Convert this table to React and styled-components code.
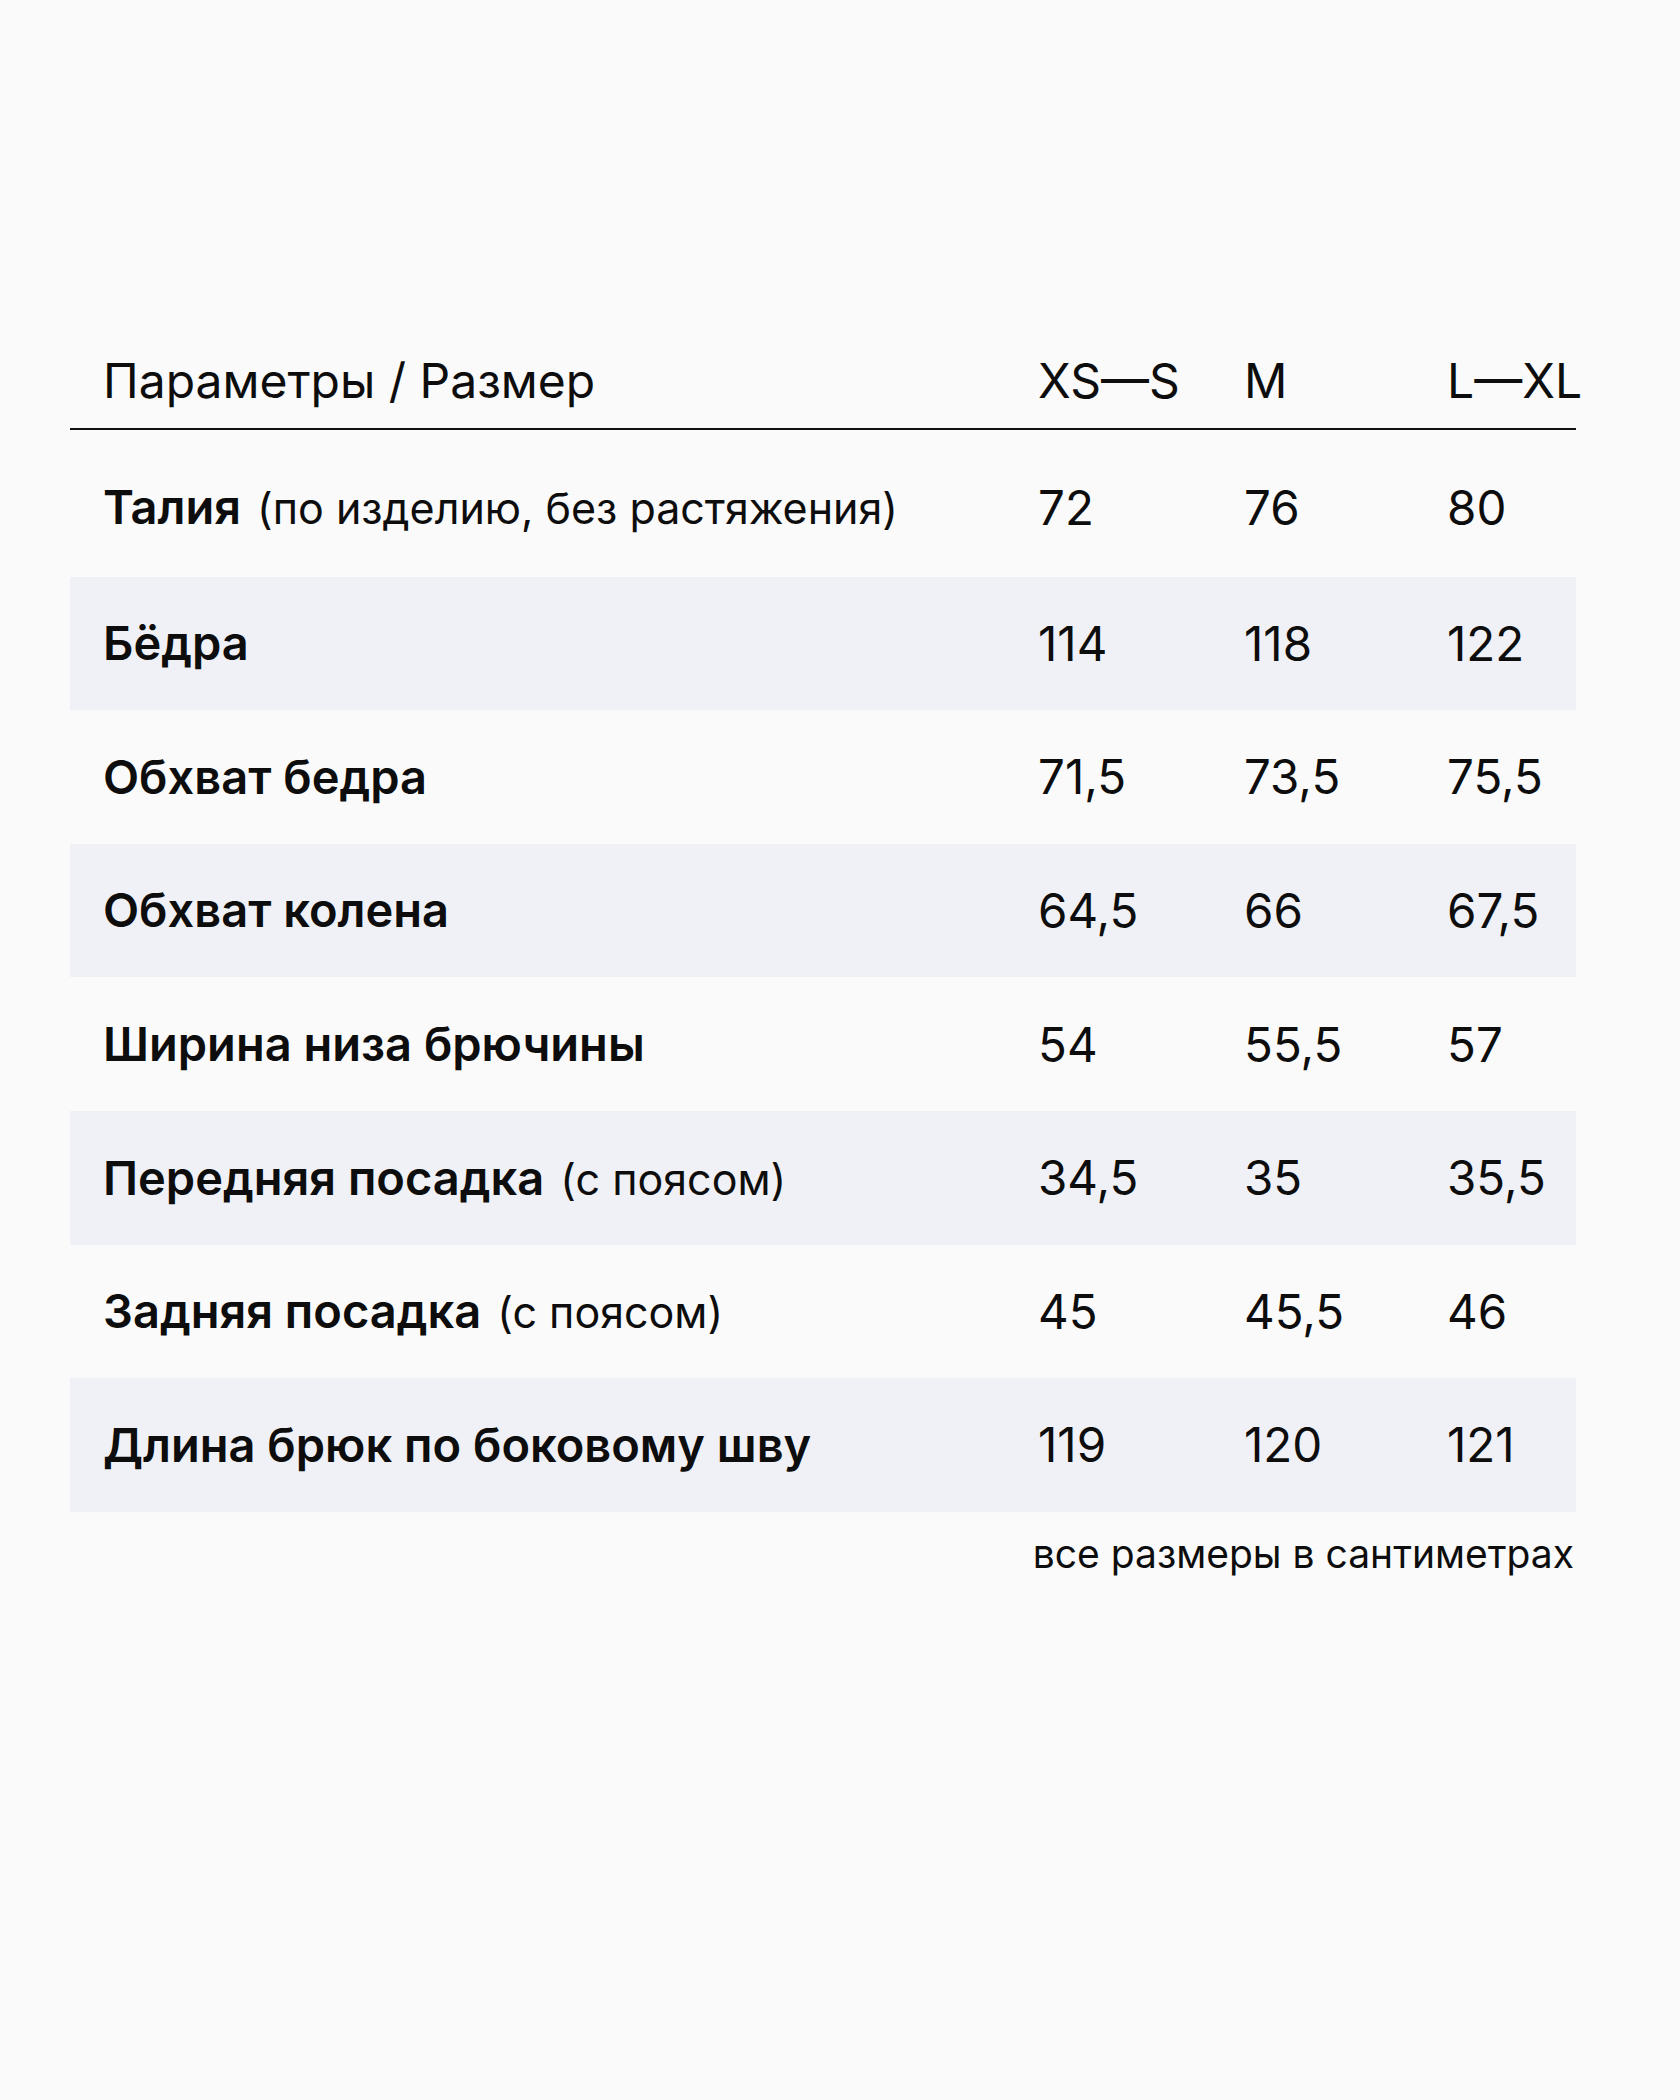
import React from "react";
import styled, { createGlobalStyle } from "styled-components";

const Global = createGlobalStyle`
  html, body { margin: 0; padding: 0; background: #fafafa; }
  body { font-family: Inter, "Noto Sans", sans-serif; color: #0d0d0d; }
`;

const Page = styled.div`
  width: 1680px;
  height: 2100px;
  box-sizing: border-box;
  padding: 352px 104px 0 70px;
  background: #fafafa;
`;

const Table = styled.div`
  display: flex;
  flex-direction: column;
`;

const cols = `935px 206px 203px 1fr`;

const HeaderRow = styled.div`
  display: grid;
  grid-template-columns: ${cols};
  padding: 0 0 18px 33px;
  border-bottom: 2px solid #111;
  font-size: 48px;
  line-height: 1.2;
  font-weight: 400;
  white-space: nowrap;
`;

const Row = styled.div`
  display: grid;
  grid-template-columns: ${cols};
  align-items: center;
  box-sizing: border-box;
  height: ${(p) => (p.$first ? "147px" : "133.6px")};
  padding: ${(p) => (p.$first ? "8px 0 0 33px" : "0 0 0 33px")};
  background: ${(p) => (p.$shaded ? "#f0f1f6" : "transparent")};
  white-space: nowrap;
`;

const Label = styled.div`
  display: flex;
  align-items: baseline;
  line-height: 1.2;
`;

const Name = styled.span`
  font-size: 47px;
  font-weight: 600;
`;

const Note = styled.span`
  font-size: 43px;
  font-weight: 400;
  margin-left: 16px;
`;

const Value = styled.div`
  font-size: 47.5px;
  font-weight: 400;
  line-height: 1.2;
`;

const Footnote = styled.div`
  margin-top: 19px;
  padding-right: 2px;
  text-align: right;
  font-size: 39px;
  line-height: 1.2;
  font-weight: 400;
`;

const rows = [
  { name: "Талия", note: "(по изделию, без растяжения)", v: ["72", "76", "80"] },
  { name: "Бёдра", v: ["114", "118", "122"] },
  { name: "Обхват бедра", v: ["71,5", "73,5", "75,5"] },
  { name: "Обхват колена", v: ["64,5", "66", "67,5"] },
  { name: "Ширина низа брючины", v: ["54", "55,5", "57"] },
  { name: "Передняя посадка", note: "(с поясом)", v: ["34,5", "35", "35,5"] },
  { name: "Задняя посадка", note: "(с поясом)", v: ["45", "45,5", "46"] },
  { name: "Длина брюк по боковому шву", v: ["119", "120", "121"] },
];

export default function App() {
  return (
    <>
      <Global />
      <Page>
        <Table>
          <HeaderRow>
            <div>Параметры / Размер</div>
            <div>XS—S</div>
            <div>M</div>
            <div>L—XL</div>
          </HeaderRow>
          {rows.map((r, i) => (
            <Row key={r.name} $first={i === 0} $shaded={i % 2 === 1}>
              <Label>
                <Name>{r.name}</Name>
                {r.note && <Note>{r.note}</Note>}
              </Label>
              {r.v.map((v, j) => (
                <Value key={j}>{v}</Value>
              ))}
            </Row>
          ))}
        </Table>
        <Footnote>все размеры в сантиметрах</Footnote>
      </Page>
    </>
  );
}
